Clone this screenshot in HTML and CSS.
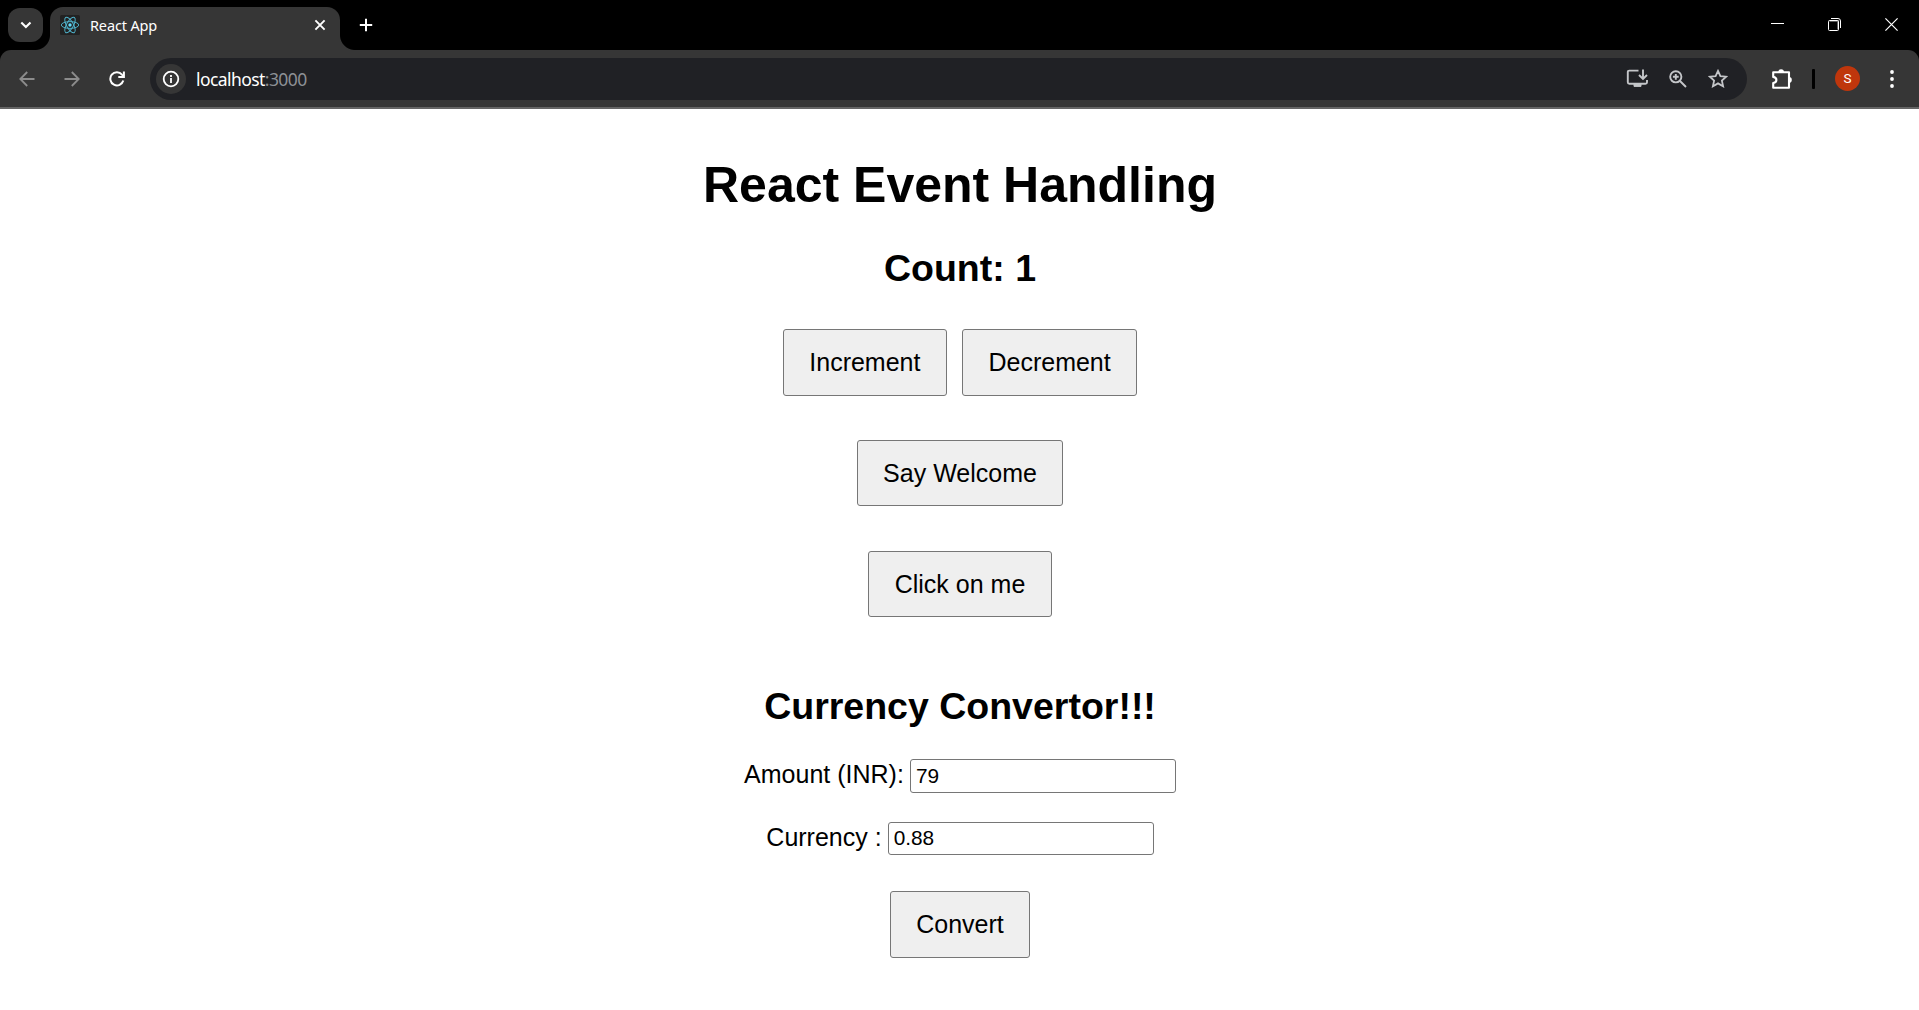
FILE: index.html
```html
<!DOCTYPE html>
<html lang="en">
<head>
<meta charset="utf-8">
<title>React App</title>
<link rel="stylesheet" href="styles.css">
</head>
<body>
<header class="browser">
  <div class="tabstrip">
    <div class="tab-search"><svg width="35" height="34" viewBox="0 0 35 34" fill="none" stroke="#fff" stroke-width="2.1"><path d="M13.3 14.4l4.6 4.6 4.6-4.6"/></svg></div>
    <div class="tab">
      <svg class="favicon" width="20" height="20" viewBox="0 0 20 20"><rect width="20" height="20" rx="1.5" fill="#222"/><g fill="none" stroke="#4fb3cc" stroke-width=".95"><ellipse cx="10" cy="10" rx="8.7" ry="3.4"/><ellipse cx="10" cy="10" rx="8.7" ry="3.4" transform="rotate(60 10 10)"/><ellipse cx="10" cy="10" rx="8.7" ry="3.4" transform="rotate(120 10 10)"/></g><circle cx="10" cy="10" r="1.7" fill="#61dafb"/></svg>
      <span class="tab-title">React App</span>
      <svg class="tab-close" width="12" height="12" viewBox="0 0 12 12" stroke="#fff" stroke-width="1.9"><path d="M1.4 1.4l9.2 9.2M10.6 1.4l-9.2 9.2"/></svg>
    </div>
    <svg class="new-tab" width="14" height="14" viewBox="0 0 14 14" stroke="#fff" stroke-width="2"><path d="M7 .8v12.4M.8 7h12.4"/></svg>
    <div class="window-controls">
      <svg width="13" height="13" viewBox="0 0 13 13" stroke="#fff"><path d="M0 5.5h13"/></svg>
      <svg width="13" height="13" viewBox="0 0 13 13" fill="none" stroke="#fff"><path d="M1.5 3h8.5v8.5" stroke="#777" stroke-width="1.6"/><rect x=".5" y="2.5" width="10" height="10" rx="1"/><path d="M3 .5h7q2.5 0 2.5 2.5v7"/></svg>
      <svg width="13" height="13" viewBox="0 0 13 13" stroke="#fff" stroke-width="1.2"><path d="M.4 .4l12.2 12.2M12.6 .4L.4 12.6"/></svg>
    </div>
  </div>
  <div class="toolbar">
    <svg class="nav" width="16" height="16" viewBox="0 0 16 16" fill="none" stroke="#8c8c8c" stroke-width="1.8"><path d="M15.5 8H1.5M8.2 1L1.3 8l6.9 7"/></svg>
    <svg class="nav" width="16" height="16" viewBox="0 0 16 16" fill="none" stroke="#8c8c8c" stroke-width="1.8"><path d="M.5 8h14M7.8 1l6.9 7-6.9 7"/></svg>
    <svg class="nav" width="16" height="16" viewBox="0 0 16 16" fill="none" stroke="#fff" stroke-width="2"><path d="M14.3 9.6A6.6 6.6 0 1 1 13 3.6L14.6 5.4"/><path d="M14.9 .4v5.5H9.3"/></svg>
    <div class="omnibox">
      <div class="site-info"><svg width="18" height="18" viewBox="0 0 18 18" fill="none" stroke="#fff" stroke-width="1.8"><circle cx="9" cy="9" r="7.3"/><path d="M9 8v5"/><path d="M9 5v1.9"/></svg></div>
      <span class="url">localhost<span class="port">:3000</span></span>
      <div class="omni-actions">
        <svg width="22" height="19" viewBox="0 0 22 19" fill="none" stroke="#c4c6c9" stroke-width="1.9"><path d="M12.5 1.6H3.3Q1.8 1.6 1.8 3.1v10.1q0 1.5 1.5 1.5h16.2q1.5 0 1.5-1.5V11"/><path d="M17 .5v9M13 6l4 4 4-4"/><path d="M8 14.8h7v2.6H8z" fill="#c4c6c9" stroke-width="1"/></svg>
        <svg width="18" height="18" viewBox="0 0 18 18" fill="none" stroke="#c4c6c9" stroke-width="1.9"><circle cx="6.8" cy="6.8" r="5.6"/><path d="M11 11l6 6M6.8 3.9v5.8M3.9 6.8h5.8"/></svg>
        <svg width="20" height="19" viewBox="0 0 20 19" fill="none" stroke="#c4c6c9" stroke-width="1.8"><path d="M10 1.9l2.4 5.2 5.7.6-4.2 3.9 1.2 5.7-5.1-2.9-5.1 2.9 1.2-5.7-4.2-3.9 5.7-.6z"/></svg>
      </div>
    </div>
    <svg class="extensions" width="22" height="22" viewBox="0 0 22 22" fill="none" stroke="#fff" stroke-width="2.1" stroke-linejoin="round"><path d="M2.2 4.2H18v15.6H2.2v-4.7q3.2-.6 3.2-3.1T2.2 8.9z"/><path d="M7.2 4.2a2.9 2.9 0 0 1 5.8 0zM18 9.1a2.8 2.8 0 0 1 0 5.6z" fill="#fff" stroke="none"/></svg>
    <div class="separator"></div>
    <div class="avatar">S</div>
    <svg class="menu" width="4" height="18" viewBox="0 0 4 18" fill="#fff"><circle cx="2" cy="2" r="1.9"/><circle cx="2" cy="9" r="1.9"/><circle cx="2" cy="16" r="1.9"/></svg>
  </div>
</header>
<main class="app">
  <h1>React Event Handling</h1>
  <h2>Count: 1</h2>
  <div class="counter"><button class="btn">Increment</button><button class="btn">Decrement</button></div>
  <button class="btn welcome">Say Welcome</button>
  <button class="btn click">Click on me</button>
  <h2 class="convertor-title">Currency Convertor!!!</h2>
  <form class="convertor">
    <div class="field"><label for="amount">Amount (INR):</label><input id="amount" type="text" value="79"></div>
    <div class="field currency"><label for="currency">Currency :</label><input id="currency" type="text" value="0.88"></div>
    <button class="btn convert" type="button">Convert</button>
  </form>
</main>
</body>
</html>
```
FILE: styles.css
```css
* { box-sizing: border-box; }
body { margin: 0; background: #fff; color: #000; font-family: "Liberation Sans", Arial, sans-serif; overflow: hidden; }
svg { display: block; flex: none; }

.browser { height: 109px; background: #000; font-family: "Noto Sans", sans-serif; }
.tabstrip { height: 50px; display: flex; align-items: flex-start; }
.tab-search { width: 35px; height: 34px; margin: 8px 0 0 8px; border-radius: 12px; background: #363636; }
.tab { position: relative; width: 290px; height: 43px; margin: 7px 0 0 7px; padding: 0 14px 7px 10px; display: flex; align-items: center; background: #363636; border-radius: 13px 13px 0 0; }
.tab::before, .tab::after { content: ""; position: absolute; bottom: 0; width: 15px; height: 15px; }
.tab::before { left: -15px; background: radial-gradient(circle at 0 0, transparent 14.5px, #363636 15.5px); }
.tab::after { right: -15px; background: radial-gradient(circle at 100% 0, transparent 14.5px, #363636 15.5px); }
.tab-title { margin-left: 10px; font-size: 14.5px; line-height: 20px; letter-spacing: -0.15px; color: #fff; }
.tab-close { margin-left: auto; }
.new-tab { margin: 18px 0 0 19px; }
.window-controls { margin: 18px 21px 0 auto; display: flex; gap: 44px; }

.toolbar { height: 59px; display: flex; align-items: center; padding: 0 25px 0 19px; background: #363636; border-bottom: 2px solid #656565; border-radius: 11px 11px 0 0; }
.nav { margin-right: 29px; }
.nav + .nav + .nav { margin-right: 25px; }
.omnibox { width: 1597px; height: 42px; padding: 0 19px 0 6px; display: flex; align-items: center; border-radius: 21px; background: #202125; }
.site-info { width: 30px; height: 30px; display: grid; place-items: center; border-radius: 50%; background: #363636; }
.url { margin-left: 10px; font-size: 17.5px; line-height: 24px; letter-spacing: -0.57px; color: #fff; }
.port { color: #8d9095; }
.omni-actions { margin-left: auto; display: flex; align-items: center; gap: 21px; }
.extensions { margin-left: 24px; }
.separator { width: 3px; height: 20px; margin-left: 19px; border-radius: 1px; background: #000; }
.avatar { width: 25px; height: 25px; margin-left: 20px; border-radius: 50%; background: #bf360c; color: #fff; font: 13.5px/25px Roboto, sans-serif; text-align: center; }
.menu { margin-left: auto; }

.app { display: flex; flex-direction: column; align-items: center; padding: 47px 0 0 1px; }
h1 { margin: 0; font-size: 50px; line-height: 58px; }
h2 { margin: 33px 0 0; font-size: 37.5px; line-height: 43px; }
.counter { display: flex; gap: 15px; margin-top: 39px; }
.btn { height: 67px; padding: 0 25.5px; border: 1px solid #767676; border-radius: 3px; background: #efefef; color: #000; font: 25px/29px "Liberation Sans", Arial, sans-serif; }
.welcome { height: 66px; margin-top: 44px; }
.click { height: 66px; margin-top: 45px; }
.convertor-title { margin-top: 68px; }
.convertor { display: flex; flex-direction: column; align-items: center; margin-top: 31px; }
.field { display: flex; align-items: center; gap: 6px; font-size: 25px; line-height: 31px; }
.field label { margin-top: -3px; }
.field input { width: 266px; height: 34px; padding: 0 5px 1px; border: 1px solid #767676; border-radius: 3px; background: #fff; color: #000; font: 20.83px "Liberation Sans", Arial, sans-serif; }
.currency { margin-top: 29px; }
.currency input { height: 33px; padding-bottom: 2px; }
.convert { margin-top: 36px; }
```
